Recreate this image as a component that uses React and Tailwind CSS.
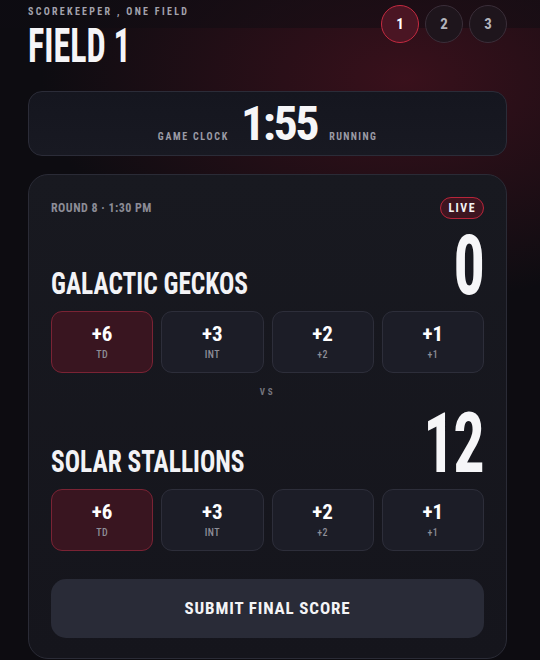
import React, { useState } from "react";

const cond = { fontFamily: "'Roboto Condensed', Roboto, sans-serif" };

const actions = [
  { pts: "+6", label: "TD" },
  { pts: "+3", label: "INT" },
  { pts: "+2", label: "+2" },
  { pts: "+1", label: "+1" },
];

function TeamBlock({ name, score }) {
  return (
    <div>
      <div className="flex items-baseline justify-between">
        <h2 className="origin-left scale-x-[0.82] text-[31px] font-bold leading-none text-[#f3f3f6]">{name}</h2>
        <div className="origin-right scale-x-[0.74] text-[84px] font-bold leading-none tracking-[-0.02em] text-[#f6f6f8]">{score}</div>
      </div>
      <div className="mt-[3px] grid grid-cols-4 gap-2">
        {actions.map((a, i) => (
          <button
            key={a.pts}
            className={
              i === 0
                ? "flex h-[62px] flex-col items-center justify-center rounded-[11px] border border-[#7a2334] bg-[#391520]"
                : "flex h-[62px] flex-col items-center justify-center rounded-[11px] border border-[#2d2e3a] bg-[#1c1d27]"
            }
          >
            <span className="text-[21px] font-bold leading-none text-white">{a.pts}</span>
            <span className="mt-[5px] text-[10px] font-medium leading-none tracking-[0.04em] text-[#8d8e98]">{a.label}</span>
          </button>
        ))}
      </div>
    </div>
  );
}

export default function App() {
  const [field, setField] = useState(1);

  return (
    <div
      style={cond}
      className="min-h-[660px] w-full overflow-hidden bg-[#0d0c11] bg-[linear-gradient(to_bottom,rgba(14,12,18,0.5)_28px,transparent_28px),radial-gradient(ellipse_90%_45%_at_75%_12%,rgba(110,22,40,0.45),transparent_75%)] pt-[6px] pl-7 pr-[33px]"
    >
      {/* header */}
      <div className="flex items-start justify-between">
        <div>
          <p className="text-[10px] font-bold leading-[12px] tracking-[0.23em] text-[#a3a3ad]">SCOREKEEPER , ONE FIELD</p>
          <h1 className="mt-[8px] origin-left scale-x-[0.71] text-[48px] font-bold leading-[40px] text-[#f5f5f7]">FIELD 1</h1>
        </div>
        <div className="-mt-[1px] flex gap-[6px]">
          {[1, 2, 3].map((n) => (
            <button
              key={n}
              onClick={() => setField(n)}
              className={
                n === field
                  ? "h-[38px] w-[38px] rounded-full border border-[#c42a40] bg-[#4a1523] text-[15px] font-bold text-white"
                  : "h-[38px] w-[38px] rounded-full border border-[#3a2e39] bg-[#1e151c] text-[15px] font-bold text-[#b4b4bd]"
              }
            >
              {n}
            </button>
          ))}
        </div>
      </div>

      {/* clock */}
      <div className="mt-[25px] flex h-[65px] items-baseline justify-center gap-3 rounded-[14px] border border-[#2b2c38] bg-[linear-gradient(to_bottom,#15161f,#181922)] pt-[8px]">
        <span className="text-[10px] font-bold leading-none tracking-[0.17em] text-[#9c9ca6]">GAME CLOCK</span>
        <span className="text-[48px] font-bold leading-none tracking-[-0.05em] text-[#f6f6f8]">1:55</span>
        <span className="text-[10px] font-bold leading-none tracking-[0.14em] text-[#9c9ca6]">RUNNING</span>
      </div>

      {/* match card */}
      <div className="mt-[18px] rounded-[20px] border border-[#2a2b36] bg-[linear-gradient(to_bottom,#181920,#15151c)] px-[22px] pt-[22px] pb-[20px]">
        <div className="flex items-center justify-between">
          <span className="text-[12px] font-bold tracking-[0.04em] text-[#8c8c96]">ROUND 8 · 1:30 PM</span>
          <span className="rounded-full border border-[#b8253a] bg-[#3d1520] px-[7px] py-[3px] text-[12px] font-bold leading-[14px] tracking-[0.12em] text-[#f2f2f4]">LIVE</span>
        </div>

        <div className="mt-[5px]">
          <TeamBlock name="GALACTIC GECKOS" score="0" />
        </div>

        <div className="mt-[15px] text-center text-[9px] font-bold leading-none tracking-[0.3em] text-[#76767f]">VS</div>

        <div className="mt-[5px]">
          <TeamBlock name="SOLAR STALLIONS" score="12" />
        </div>

        <button className="mt-[28px] h-[59px] w-full rounded-[15px] bg-[#292b37] text-[17px] font-bold tracking-[0.05em] text-[#f4f4f6]">
          SUBMIT FINAL SCORE
        </button>
      </div>
    </div>
  );
}
